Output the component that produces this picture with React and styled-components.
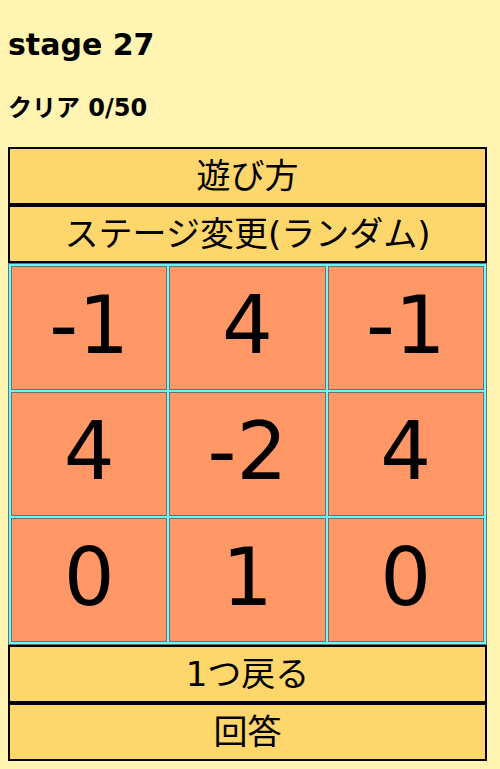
import React from "react";
import styled, { createGlobalStyle } from "styled-components";

const GlobalStyle = createGlobalStyle`
  html, body {
    background: #fff4b1;
  }
  body {
    margin: 8px;
    font-family: "DejaVu Sans", "Noto Sans CJK JP", sans-serif;
    color: #000;
  }
`;

const Page = styled.div`
  display: flex;
  flex-direction: column;
  align-items: flex-start;
`;

const Title = styled.h1`
  margin: 21.6px 0 0;
  font-size: 30px;
  line-height: 30px;
  font-weight: bold;
`;

const Subtitle = styled.h3`
  margin: 36.8px 0 0;
  font-size: 24px;
  line-height: 24px;
  font-weight: bold;
`;

const Controls = styled.div`
  margin-top: 26.6px;
  width: 479px;
  display: flex;
  flex-direction: column;
`;

const ActionButton = styled.button`
  box-sizing: border-box;
  width: 100%;
  height: 58px;
  margin: 0;
  padding: 0;
  border: 2px solid #000;
  background: #fdd66c;
  font-family: "DejaVu Sans", "Noto Sans CJK JP", sans-serif;
  font-size: 34px;
  line-height: 1;
  color: #000;
  display: flex;
  align-items: center;
  justify-content: center;
  cursor: pointer;
`;

const Board = styled.div`
  box-sizing: border-box;
  width: 100%;
  height: 382px;
  border: 1px solid #6e6e6e;
  background: #66ffff;
  padding: 2px;
  display: grid;
  grid-template-columns: repeat(3, 1fr);
  grid-template-rows: repeat(3, 1fr);
  gap: 2px;
`;

const Cell = styled.button`
  box-sizing: border-box;
  margin: 0;
  padding: 0 0 4px;
  border: 1px solid #6e6e6e;
  background: #ff9766;
  font-family: "DejaVu Sans", "Noto Sans CJK JP", sans-serif;
  font-size: 80px;
  line-height: 1;
  color: #000;
  display: flex;
  align-items: center;
  justify-content: center;
  cursor: pointer;
`;

const cells = [-1, 4, -1, 4, -2, 4, 0, 1, 0];

export default function App() {
  return (
    <>
      <GlobalStyle />
      <Page>
        <Title>stage 27</Title>
        <Subtitle>クリア 0/50</Subtitle>
        <Controls>
          <ActionButton>遊び方</ActionButton>
          <ActionButton>ステージ変更(ランダム)</ActionButton>
          <Board>
            {cells.map((v, i) => (
              <Cell key={i}>{v}</Cell>
            ))}
          </Board>
          <ActionButton>1つ戻る</ActionButton>
          <ActionButton>回答</ActionButton>
        </Controls>
      </Page>
    </>
  );
}
